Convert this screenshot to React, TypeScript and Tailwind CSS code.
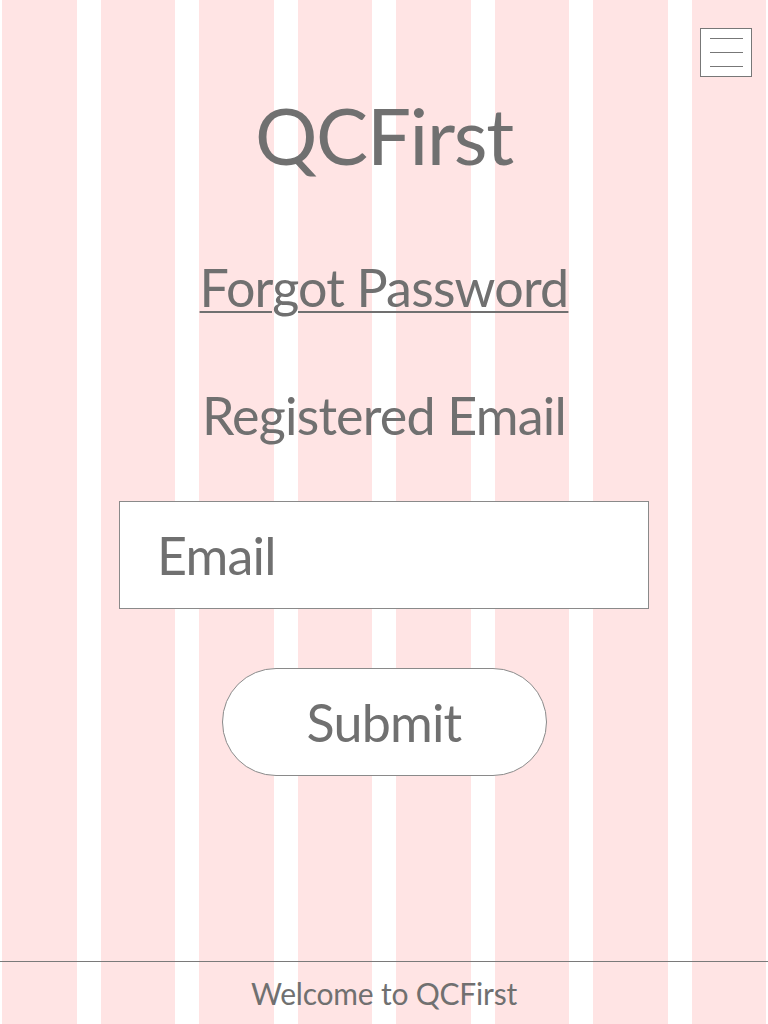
import React from "react";

const Stripes = () => (
  <div className="pointer-events-none absolute inset-0 grid grid-cols-8 gap-x-6 px-[2px]">
    {Array.from({ length: 8 }).map((_, i) => (
      <div key={i} className="bg-[#ffe4e4]" />
    ))}
  </div>
);

export default function App() {
  return (
    <div
      className="relative flex min-h-screen flex-col bg-white text-[#707070]"
      style={{ fontFamily: 'Lato, "Open Sans", sans-serif' }}
    >
      <Stripes />

      <header className="relative flex justify-end pr-4 pt-7">
        <button className="flex h-[49px] w-[52px] flex-col items-center justify-center gap-[13px] border border-[#777] bg-white">
          <span className="h-px w-[33px] bg-[#777]" />
          <span className="h-px w-[33px] bg-[#777]" />
          <span className="h-px w-[33px] bg-[#777]" />
        </button>
      </header>

      <main className="relative flex flex-col items-center">
        <h1 className="mt-[19px] text-[78px] leading-none tracking-[-1.3px]">QCFirst</h1>
        <a
          href="#"
          className="mt-[87px] text-[52px] leading-none tracking-[-0.8px] underline decoration-2 underline-offset-[4px]"
        >
          Forgot Password
        </a>
        <p className="mt-[76px] text-[52px] leading-none tracking-[-0.8px]">Registered Email</p>
        <input
          type="email"
          placeholder="Email"
          className="mt-[60px] h-[108px] w-[530px] border border-[#8a8a8a] bg-white px-[37px] text-[52px] leading-none tracking-[-0.8px] outline-none placeholder:text-[#707070]"
        />
        <button className="mt-[59px] h-[108px] w-[325px] rounded-full border border-[#8a8a8a] bg-white text-[52px] leading-none tracking-[-0.8px]">
          Submit
        </button>
      </main>

      <footer className="relative mt-auto h-[63px] border-t border-[#7a7a7a] pt-[16px] text-center text-[30px] leading-none tracking-[-0.2px]">
        Welcome to QCFirst
      </footer>
    </div>
  );
}
